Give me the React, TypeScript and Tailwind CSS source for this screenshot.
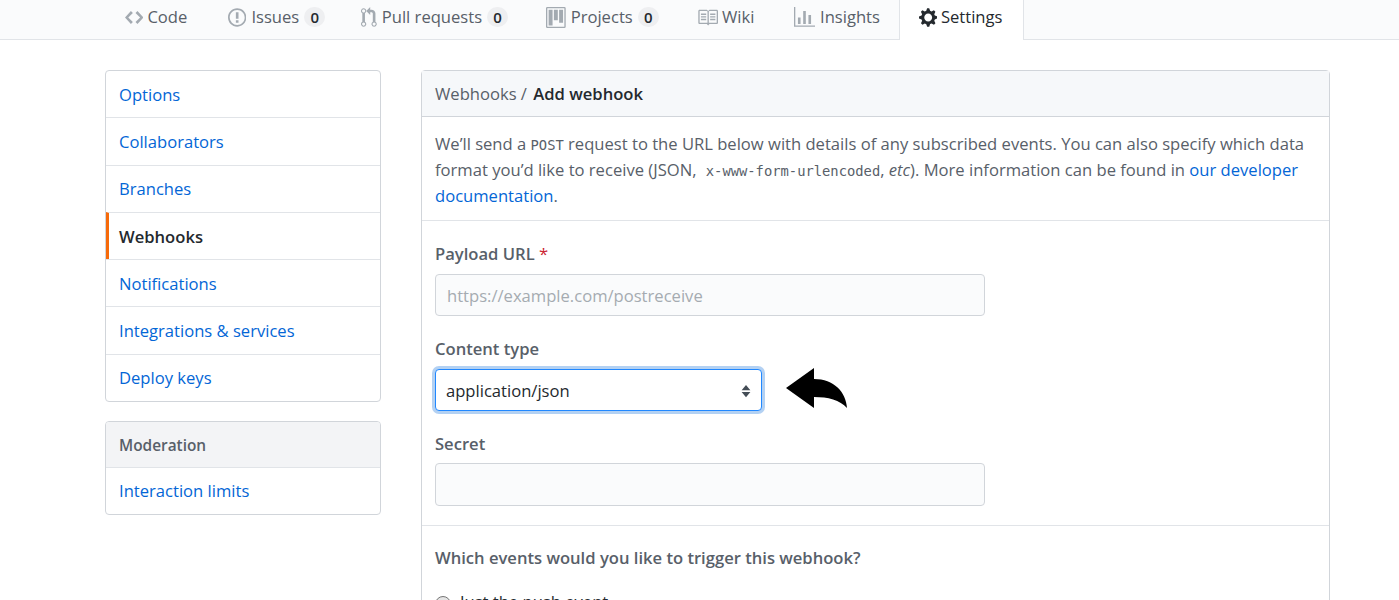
const font = "font-['Open_Sans','Noto_Sans',sans-serif]";

function Octicon({ w, d, className }: { w: number; d: string; className: string }) {
  return (
    <svg viewBox={`0 0 ${w} 16`} className={className} fill="currentColor">
      <path fillRule="evenodd" d={d} />
    </svg>
  );
}

const icons = {
  code: "M9.5 3L8 4.5 11.5 8 8 11.5 9.5 13 14 8 9.5 3zm-5 0L0 8l4.5 5L6 11.5 2.5 8 6 4.5 4.5 3z",
  issue:
    "M7 2.3c3.14 0 5.7 2.56 5.7 5.7s-2.56 5.7-5.7 5.7A5.71 5.71 0 0 1 1.3 8c0-3.14 2.56-5.7 5.7-5.7zM7 1C3.14 1 0 4.14 0 8s3.14 7 7 7 7-3.14 7-7-3.14-7-7-7zm1 3H6v5h2V4zm0 6H6v2h2v-2z",
  pull: "M11 11.28V5c-.03-.78-.34-1.47-.94-2.06C9.46 2.35 8.78 2.03 8 2H7V0L4 3l3 3V4h1c.27.02.48.11.69.31.21.2.3.42.31.69v6.28A1.993 1.993 0 0 0 10 15a1.993 1.993 0 0 0 1-3.72zm-1 2.92c-.66 0-1.2-.55-1.2-1.2 0-.65.55-1.2 1.2-1.2.65 0 1.2.55 1.2 1.2 0 .65-.55 1.2-1.2 1.2zM4 3c0-1.11-.89-2-2-2a1.993 1.993 0 0 0-1 3.72v6.56A1.993 1.993 0 0 0 2 15a1.993 1.993 0 0 0 1-3.72V4.72c.59-.34 1-.98 1-1.72zm-.8 10c0 .66-.55 1.2-1.2 1.2-.65 0-1.2-.55-1.2-1.2 0-.65.55-1.2 1.2-1.2.65 0 1.2.55 1.2 1.2zM2 4.2C1.34 4.2.8 3.65.8 3c0-.65.55-1.2 1.2-1.2.65 0 1.2.55 1.2 1.2 0 .65-.55 1.2-1.2 1.2z",
  project:
    "M10 12h3V2h-3v10zm-4-2h3V2H6v8zm-4 4h3V2H2v12zm-1 1h13V1H1v14zM14 0H1a1 1 0 0 0-1 1v14a1 1 0 0 0 1 1h13a1 1 0 0 0 1-1V1a1 1 0 0 0-1-1z",
  book: "M3 5h4v1H3V5zm0 3h4V7H3v1zm0 2h4V9H3v1zm11-5h-4v1h4V5zm0 2h-4v1h4V7zm0 2h-4v1h4V9zm2-6v9c0 .55-.45 1-1 1H9.5l-1 1-1-1H2c-.55 0-1-.45-1-1V3c0-.55.45-1 1-1h5.5l1 1 1-1H15c.55 0 1 .45 1 1zm-8 .5L7.5 3H2v9h6V3.5zm7-.5H9.5l-.5.5V12h6V3z",
  graph: "M16 14v1H0V0h1v14h15zM5 13H3V8h2v5zm4 0H7V3h2v10zm4 0h-2V6h2v7z",
  gear: "M14 8.77v-1.6l-1.94-.64-.45-1.09.88-1.84-1.13-1.13-1.81.91-1.09-.45-.69-1.92h-1.6l-.63 1.94-1.11.45-1.84-.88-1.13 1.13.91 1.81-.45 1.09L0 7.23v1.59l1.94.64.45 1.09-.88 1.84 1.13 1.13 1.81-.91 1.09.45.69 1.92h1.59l.63-1.94 1.11-.45 1.84.88 1.13-1.13-.92-1.81.47-1.09L14 8.75v.02zM7 11c-1.66 0-3-1.34-3-3s1.34-3 3-3 3 1.34 3 3-1.34 3-3 3z",
};

function Counter() {
  return (
    <span className="ml-[5px] flex h-[20px] w-[21px] items-center justify-center rounded-full bg-[#eeeff1] text-[15px] font-semibold text-[#24292e]">
      0
    </span>
  );
}

function Tab({ w, iw, icon, label, count, gap }: { w: string; iw: number; icon: string; label: string; count?: boolean; gap: string }) {
  return (
    <div className={`flex h-full items-center pb-[5px] ${w}`}>
      <Octicon w={iw} d={icon} className={`h-[21px] shrink-0 text-[#a3aab1] ${gap}`} />
      <span className="text-[#586069]">{label}</span>
      {count && <Counter />}
    </div>
  );
}

const rows = ["Options", "Collaborators", "Branches", "Webhooks", "Notifications", "Integrations & services", "Deploy keys"];

export default function App() {
  return (
    <div className={`${font} h-screen overflow-hidden bg-white text-[16.6px] text-[#24292e]`}>
      <div className="flex h-[40px] border-b border-[#e1e4e8] bg-[#fafbfc] pl-[125px]">
        <Tab w="w-[103px]" iw={14} icon={icons.code} label="Code" gap="mr-[4px]" />
        <Tab w="w-[133px]" iw={14} icon={icons.issue} label="Issues" count gap="mr-[5px]" />
        <Tab w="w-[185px]" iw={12} icon={icons.pull} label="Pull requests" count gap="mr-[5px]" />
        <Tab w="w-[151px]" iw={15} icon={icons.project} label="Projects" count gap="mr-[5px]" />
        <Tab w="w-[97px]" iw={16} icon={icons.book} label="Wiki" gap="mr-[4px]" />
        <Tab w="w-[105px]" iw={16} icon={icons.graph} label="Insights" gap="mr-[5px]" />
        <div className="flex h-[40px] w-[125px] items-center justify-center border-x border-[#e1e4e8] bg-white pb-[6px] pr-[2px]">
          <Octicon w={14} d={icons.gear} className="mr-[4px] h-[21px] shrink-0 text-[#24292e]" />
          <span>Settings</span>
        </div>
      </div>

      <div className="flex items-start pl-[105px] pt-[30px]">
        <div className="w-[276px] shrink-0">
          <div className="rounded-[4px] border border-[#d1d5da]">
            {rows.map((r, i) => (
              <div
                key={r}
                className={`flex items-center px-[13px] pt-[2px] ${i > 0 ? "h-[47.25px] border-t border-[#e1e4e8]" : "h-[46.4px]"} ${
                  r === "Webhooks" ? "border-l-[3px] border-l-[#f66a0a] pl-[10px] font-semibold text-[#24292e]" : "text-[#0366d6]"
                }`}
              >
                {r}
              </div>
            ))}
          </div>
          <div className="mt-[19px] overflow-hidden rounded-[4px] border border-[#d1d5da]">
            <div className="flex h-[46px] items-center border-b border-[#e1e4e8] bg-[#f3f4f6] px-[13px] pt-[2px] text-[15.4px] font-semibold text-[#586069]">
              Moderation
            </div>
            <div className="flex h-[46px] items-center px-[13px] pt-[2px] text-[#0366d6]">Interaction limits</div>
          </div>
        </div>

        <div className="ml-[40px] w-[909px] shrink-0 rounded-t-[4px] border border-[#d1d5da]">
          <div className="flex h-[46px] items-center border-b border-[#d1d5da] bg-[#f6f8fa] px-[13px] pt-[2px]">
            <span className="text-[#586069]">Webhooks /&nbsp;</span>
            <span className="ml-[2px] font-semibold">Add webhook</span>
          </div>
          <div className="h-[104px] border-b border-[#e1e4e8] px-[13px] pt-[14px] leading-[26px] text-[#586069]">
            We’ll send a <code className="font-['DejaVu_Sans_Mono',monospace] text-[13.8px] leading-none">POST</code> request to the URL below with details of any subscribed events. You can also specify which data format you’d like to receive (JSON,{" "}
            <code className="ml-[5px] font-['DejaVu_Sans_Mono',monospace] text-[13.8px] leading-none">x-www-form-urlencoded</code>, <em>etc</em>). More information can be found in{" "}
            <span className="text-[#0366d6]">our developer documentation</span>.
          </div>
          <div className="h-[305px] border-b border-[#e1e4e8] px-[13px]">
            <div className="pt-[20px] leading-[26px] font-semibold text-[#586069]">
              Payload URL <span className="font-normal text-[#cb2431]">*</span>
            </div>
            <div className="mt-[7px] flex h-[42px] w-[550px] items-center rounded-[4px] border border-[#d1d5da] bg-[#fafbfc] px-[11px] pt-[2px] text-[#a5abb1]">
              https://example.com/postreceive
            </div>
            <div className="mt-[20px] leading-[26px] font-semibold text-[#586069]">Content type</div>
            <div className="relative mt-[7px] flex h-[42px] w-[327px] items-center justify-between rounded-[4px] border border-[#2188ff] bg-white pl-[10px] pr-[10px] pt-[2px] text-[#24292e] shadow-[0_0_0_3px_rgba(3,102,214,0.3)]">
              application/json
              <svg viewBox="0 0 10 16" className="h-[14px] w-[10px] text-[#444d56]" fill="currentColor">
                <path d="M5 1 L10 7 H0 Z M0 9 H10 L5 15 Z" />
              </svg>
              <svg viewBox="0 0 62 42" className="absolute left-[350px] top-[-2px] h-[42px] w-[62px]" fill="#000">
                <path d="M0 20 L28 0 V11 C48 11 60 24 61 40 C54 32 42 29 28 29 V40 Z" />
              </svg>
            </div>
            <div className="mt-[20px] leading-[26px] font-semibold text-[#586069]">Secret</div>
            <div className="mt-[6px] h-[43px] w-[550px] rounded-[4px] border border-[#d1d5da] bg-[#fafbfc]" />
          </div>
          <div className="px-[13px]">
            <div className="pt-[19px] leading-[26px] font-semibold text-[#586069]">Which events would you like to trigger this webhook?</div>
            <div className="mt-[25px] flex items-start">
              <span className="h-[16px] w-[16px] rounded-full border border-[#767676] bg-[#e5e5e5]" />
              <span className="ml-[9px] -mt-[2px] leading-[16px] text-[#24292e]">Just the push event.</span>
            </div>
          </div>
        </div>
      </div>
    </div>
  );
}
